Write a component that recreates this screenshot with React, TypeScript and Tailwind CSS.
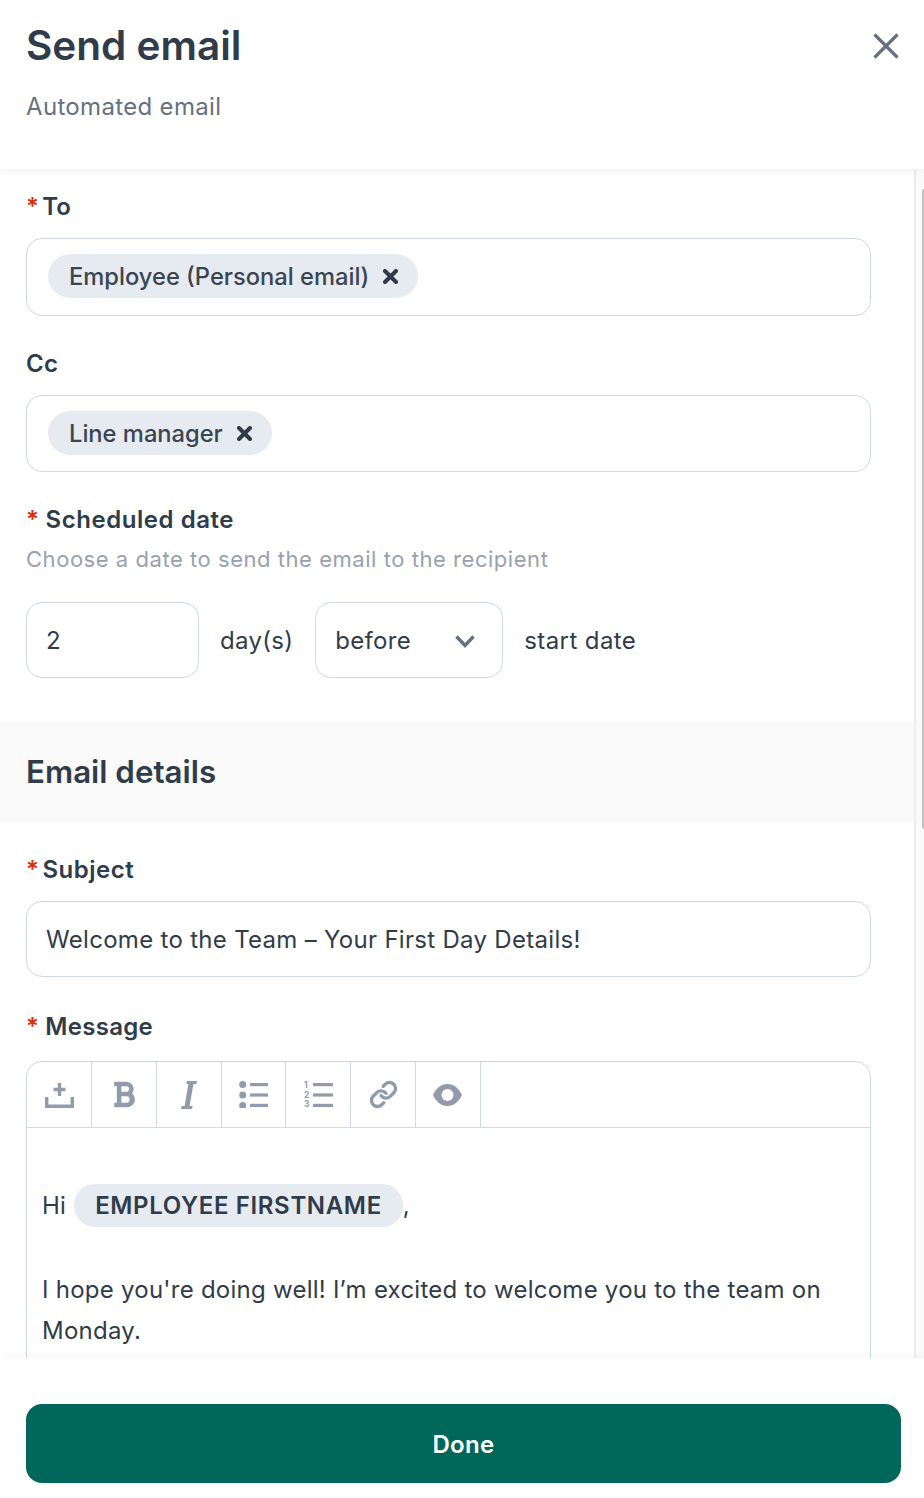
import React from 'react';
import { FaBold } from 'react-icons/fa';
import { FiLink } from 'react-icons/fi';

const Required = () => (
  <span className="text-[24px] font-semibold text-[#d92d0f]">*</span>
);

const Chip = ({ label }: { label: string }) => (
  <span className="inline-flex h-[44px] items-center gap-[14px] rounded-[22px] bg-[#e6eaf1] pl-[21px] pr-[20px] text-[23.7px] font-medium text-[#3a4552]">
    <span className="pt-[2px]">{label}</span>
    <svg viewBox="0 0 15 15" className="h-[15px] w-[15px] fill-none stroke-[#2f3b48] stroke-[4]">
      <path d="M2 2l11 11M13 2L2 13" strokeLinecap="round" />
    </svg>
  </span>
);

const UploadIcon = () => (
  <svg viewBox="0 0 29 26" className="ml-[1px] h-[26px] w-[29px] fill-none stroke-[#929bab] stroke-[3.4]">
    <path d="M1.700 15v9.300h25.600V15" />
    <path d="M14.500 1v13M8.500 7.500h12" />
  </svg>
);

const ItalicIcon = () => (
  <svg viewBox="0 0 16 28" className="h-[28px] w-[16px] fill-[#929bab]">
    <path d="M6 0h10l-.6 3h-3L8.600 25h3l-.6 3H0l.6-3h3L7.400 3h-2z" />
  </svg>
);

const BulletIcon = () => (
  <svg viewBox="0 0 29 27" className="h-[27px] w-[29px] fill-[#929bab]">
    <circle cx="3.700" cy="3.500" r="3.500" />
    <circle cx="3.700" cy="14" r="3.500" />
    <circle cx="3.700" cy="24.500" r="3.500" />
    <rect x="11" y="2" width="18" height="3.200" />
    <rect x="11" y="12.400" width="18" height="3.200" />
    <rect x="11" y="22.800" width="18" height="3.200" />
  </svg>
);

const NumberedIcon = () => (
  <svg viewBox="0 0 29 27" className="h-[27px] w-[29px] overflow-visible fill-[#929bab]">
    <text x="0" y="7" fontSize="8.500" fontWeight="700" fontFamily="Inter, sans-serif">1</text>
    <text x="0" y="17" fontSize="8.500" fontWeight="700" fontFamily="Inter, sans-serif">2</text>
    <text x="0" y="26" fontSize="8.500" fontWeight="700" fontFamily="Inter, sans-serif">3</text>
    <rect x="9" y="2" width="20" height="3.200" />
    <rect x="9" y="12.400" width="20" height="3.200" />
    <rect x="9" y="22.800" width="20" height="3.200" />
  </svg>
);

const EyeIcon = () => (
  <svg viewBox="0 0 29 22" className="h-[22px] w-[29px] fill-[#929bab]">
    <path
      fillRule="evenodd"
      d="M0 11C3 4.500 8 0 14.500 0S26 4.500 29 11c-3 6.500-8 11-14.500 11S3 17.500 0 11zM14.500 5a6 6 0 1 0 0 12 6 6 0 0 0 0-12z"
    />
  </svg>
);

const tools = [
  <UploadIcon key="upload" />,
  <FaBold key="bold" className="h-[29px] w-[24px] text-[#929bab]" />,
  <ItalicIcon key="italic" />,
  <BulletIcon key="ul" />,
  <NumberedIcon key="ol" />,
  <FiLink key="link" className="h-[29px] w-[29px] text-[#929bab]" strokeWidth={2.8} />,
  <EyeIcon key="eye" />,
];

export default function App() {
  return (
    <div className="flex h-[1498px] w-[924px] flex-col overflow-hidden bg-white font-['Inter',sans-serif] text-[#303c49]">
      <header className="relative z-10 flex h-[169px] shrink-0 items-start justify-between bg-white pl-[26px] pr-[25px] shadow-[0_2px_10px_rgba(0,0,0,0.06)]">
        <div>
          <h1 className="mt-[21px] text-[40.500px] leading-[50px] font-semibold">Send email</h1>
          <p className="mt-[21px] text-[24px] leading-[30px] tracking-[0.33px] text-[#667180]">Automated email</p>
        </div>
        <svg viewBox="0 0 26 26" className="mt-[33px] h-[26px] w-[26px] fill-none stroke-[#667180] stroke-[3.2]">
          <path d="M1.500 1.500l23 23M24.500 1.500l-23 23" />
        </svg>
      </header>

      <div className="flex min-h-0 flex-1">
        <main className="min-w-0 flex-1 overflow-hidden">
          <div className="px-[26px] pr-[43px]">
            <label className="mt-[22px] flex h-[32px] items-center gap-[3px] text-[24px] font-semibold tracking-[0.2px]">
              <Required />To
            </label>
            <div className="mt-[15px] h-[78px] rounded-[16px] border border-[#cfd8e6] pl-[21px] pt-[15px]">
              <Chip label="Employee (Personal email)" />
            </div>
            <label className="mt-[32px] block h-[32px] text-[24px] leading-[32px] font-semibold tracking-[0.2px]">Cc</label>
            <div className="mt-[15px] h-[77px] rounded-[16px] border border-[#cfd8e6] pl-[21px] pt-[15px]">
              <Chip label="Line manager" />
            </div>
            <label className="mt-[32px] flex h-[32px] items-center gap-[6px] text-[24px] font-semibold tracking-[0.55px]">
              <Required />Scheduled date
            </label>
            <p className="mt-[7px] text-[22px] leading-[32px] tracking-[0.54px] text-[#98a1b0]">Choose a date to send the email to the recipient</p>
            <div className="mt-[27px] flex items-center text-[24px] tracking-[0.3px]">
              <div className="flex h-[76px] w-[173px] items-center rounded-[16px] border border-[#cfd8e6] pl-[19px] pt-[2px]">2</div>
              <span className="ml-[21px] pt-[2px]">day(s)</span>
              <div className="ml-[22px] flex h-[76px] w-[188px] items-center justify-between rounded-[16px] border border-[#cfd8e6] pl-[19px] pr-[27px] pt-[2px]">
                before
                <svg viewBox="0 0 20 13" className="h-[13px] w-[20px] fill-none stroke-[#667180] stroke-[3.4]">
                  <path d="M1.500 1.500L10 10.500l8.500-9" />
                </svg>
              </div>
              <span className="ml-[21px] pt-[2px] tracking-[0.4px]">start date</span>
            </div>
          </div>

          <section className="mt-[44px] flex h-[100px] items-center bg-[#fafafa] pl-[26px]">
            <h2 className="text-[31.300px] font-semibold">Email details</h2>
          </section>

          <div className="px-[26px] pr-[43px]">
            <label className="mt-[32px] flex h-[32px] items-center gap-[3px] text-[24px] font-semibold tracking-[0.5px]">
              <Required />Subject
            </label>
            <div className="mt-[15px] flex h-[76px] items-center rounded-[16px] border border-[#cfd8e6] pl-[19px] pt-[2px] text-[24px] tracking-[0.3px]">
              Welcome to the Team – Your First Day Details!
            </div>
            <label className="mt-[34px] flex h-[32px] items-center gap-[6px] text-[24px] font-semibold tracking-[0.3px]">
              <Required />Message
            </label>
            <div className="mt-[18px] rounded-t-[16px] border border-[#cfd8e6] pb-[60px]">
              <div className="flex h-[66px] border-b border-[#cfd8e6]">
                {tools.map((tool, i) => (
                  <div key={i} className="flex w-[64.850px] items-center justify-center border-r border-[#cfd8e6]">
                    {tool}
                  </div>
                ))}
              </div>
              <div className="px-[15px] pt-[56px] text-[24px] leading-[41px] tracking-[0.25px]">
                <p className="flex items-center">
                  Hi
                  <span className="ml-[8px] inline-flex h-[43px] items-center rounded-[21px] bg-[#e6eaf1] px-[21px] font-semibold tracking-[0.65px]">EMPLOYEE FIRSTNAME</span>
                  ,
                </p>
                <p className="mt-[42px]">I hope you're doing well! I’m excited to welcome you to the team on Monday.</p>
              </div>
            </div>
          </div>
        </main>
        <div className="w-[10px] shrink-0 border-l-2 border-[#ececec] bg-[#fafafa] pl-[6px] pt-[20px]">
          <div className="h-[640px] w-[2px] rounded-l-full bg-[#c2c2c2]" />
        </div>
      </div>

      <footer className="relative z-10 h-[140px] shrink-0 bg-white px-[26px] pr-[23px] pt-[46px] shadow-[0_-2px_6px_rgba(0,0,0,0.04)]">
        <button className="h-[79px] w-full rounded-[16px] bg-[#02675b] pt-[2px] text-[24px] font-semibold tracking-[0.3px] text-white">Done</button>
      </footer>
    </div>
  );
}
